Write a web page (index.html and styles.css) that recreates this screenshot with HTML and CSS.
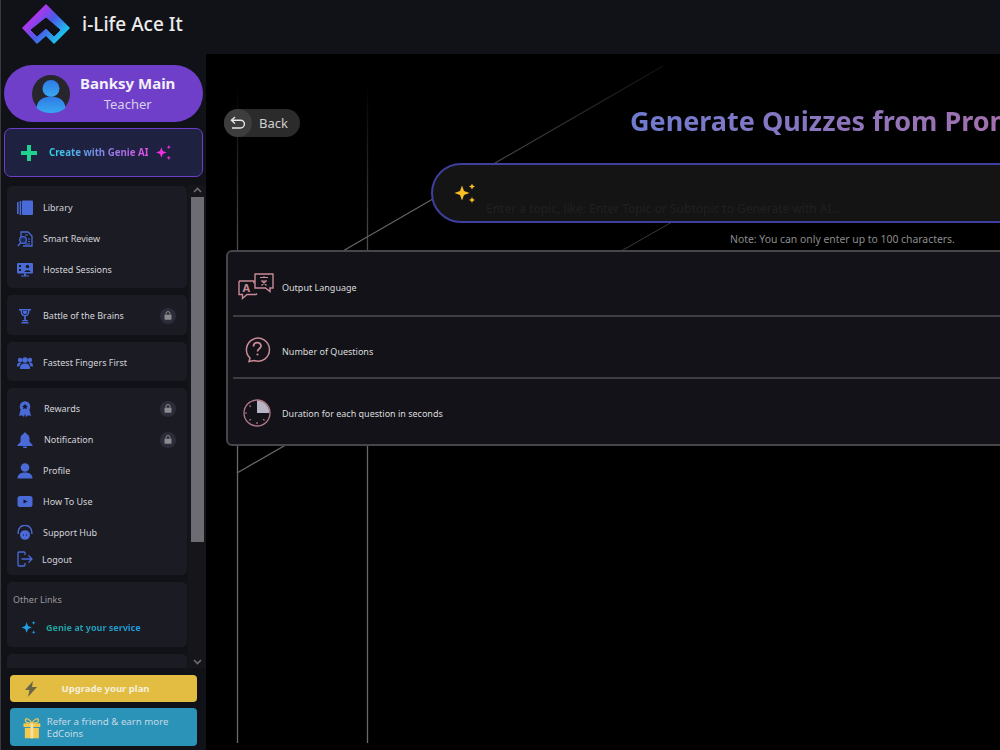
FILE: index.html
```html
<!DOCTYPE html>
<html lang="en">
<head>
    <meta charset="UTF-8">
    <meta name="viewport" content="width=device-width, initial-scale=1.0">
    <title>i-Life Ace It</title>
    <link rel="stylesheet" href="styles.css">
</head>
<body>
    <div class="sidebar">
        <div class="brand">
            <svg class="brand-logo" width="48" height="40" viewBox="0 0 48 40">
                <defs>
                    <linearGradient id="logoGrad" x1="6" y1="4" x2="40" y2="36" gradientUnits="userSpaceOnUse">
                        <stop offset="0" stop-color="#f01ef0"/>
                        <stop offset="0.55" stop-color="#4a5ae8"/>
                        <stop offset="1" stop-color="#14d4ee"/>
                    </linearGradient>
                </defs>
                <path d="M24 1 L47 24 L32 39 L24 31 L15 39 L1 24 Z" fill="url(#logoGrad)" stroke="url(#logoGrad)" stroke-width="1.500" stroke-linejoin="round"/>
                <path d="M9 26 L24 14 L38 26 L32 32 L24 24 L15 32 Z" fill="#111118" stroke="#111118" stroke-linejoin="round"/>
            </svg>
            <span class="brand-name">i-Life Ace It</span>
        </div>

        <div class="profile">
            <svg class="avatar" width="38" height="38" viewBox="0 0 38 38">
                <defs>
                    <linearGradient id="avatarGrad" x1="0" y1="0" x2="0" y2="1">
                        <stop offset="0" stop-color="#2f7ae6"/>
                        <stop offset="1" stop-color="#38a8f0"/>
                    </linearGradient>
                </defs>
                <circle cx="19" cy="19" r="19" fill="#26262c"/>
                <circle cx="19" cy="13.500" r="8.500" fill="url(#avatarGrad)"/>
                <path d="M4.500 33 C5 25 12 21.500 19 21.500 C26 21.500 33 25 33.500 33 C29 37 24 38 19 38 C14 38 9 37 4.500 33 Z" fill="url(#avatarGrad)"/>
            </svg>
            <div class="profile-text">
                <div class="profile-name">Banksy Main</div>
                <div class="profile-role">Teacher</div>
            </div>
        </div>

        <div class="create-box">
            <svg width="16" height="16" viewBox="0 0 16 16"><path d="M6 0h4v6h6v4h-6v6H6v-6H0V6h6z" fill="#1ed38e"/></svg>
            <span class="create-text">Create with Genie AI</span>
            <svg width="17" height="17" viewBox="0 0 16 16" fill="#f02fe0"><path d="M6 3 L7.300 6.700 L11 8 L7.300 9.300 L6 13 L4.700 9.300 L1 8 L4.700 6.700 Z"/><path d="M13 1 L13.600 2.400 L15 3 L13.600 3.600 L13 5 L12.400 3.600 L11 3 L12.400 2.400 Z"/><path d="M13 11 L13.600 12.400 L15 13 L13.600 13.600 L13 15 L12.400 13.600 L11 13 L12.400 12.400 Z"/></svg>
        </div>

        <div class="nav-wrap">
            <div class="nav">
                <div class="card card-top">
                    <div class="nav-row">
                        <svg class="nav-icon" viewBox="0 0 16 16" fill="#4a6ad8"><rect x="0" y="2" width="1.600" height="12"/><rect x="2.600" y="1" width="1.600" height="14"/><rect x="5" y="0.500" width="11" height="14.500" rx="1"/></svg>
                        <span>Library</span>
                    </div>
                    <div class="nav-row">
                        <svg class="nav-icon" viewBox="0 0 16 16" fill="none" stroke="#4a6ad8"><path d="M4 7V1h7l4 4v10H6" stroke-width="1.300"/><path d="M8 4h3M11 8h2M11 10.500h2M8 13h5" stroke-width="1"/><circle cx="6" cy="9" r="3.400" fill="#1c2a5c" stroke-width="1.200"/><path d="M1 15l2.600-3.400" stroke-width="1.400"/></svg>
                        <span>Smart Review</span>
                    </div>
                    <div class="nav-row">
                        <svg class="nav-icon" viewBox="0 0 16 16" fill="#4a6ad8"><rect x="0" y="1" width="16" height="10.500" rx="1"/><circle cx="10.500" cy="4.500" r="1.800" fill="#1b1b24"/><path d="M7.500 10c0-2.400 6-2.400 6 0z" fill="#1b1b24"/><rect x="2" y="3" width="2" height="2" fill="#1b1b24"/><rect x="2" y="7" width="2" height="2" fill="#1b1b24"/><path d="M7 11.500h2v2h3v1H4v-1h3z"/></svg>
                        <span>Hosted Sessions</span>
                    </div>
                </div>

                <div class="card card-battle">
                    <div class="nav-row">
                        <svg class="nav-icon" viewBox="0 0 16 16" fill="#4a6ad8"><path d="M2 1h12v1.500h-1.400L12 5.500c-.4 1.500-1.800 2.600-3.200 2.800V12h2v1.200H5.200V12h2V8.300C5.800 8.100 4.400 7 4 5.500L3.400 2.500H2zM4.900 2.500l.5 2.700c.3 1 1.400 1.700 2.600 1.700s2.300-.7 2.600-1.700l.5-2.700z"/><path d="M5.800 3h4.400l-.4 2c-.2.7-1 1.100-1.800 1.100S6.400 5.700 6.200 5z"/><rect x="4.500" y="14" width="7" height="1.500"/></svg>
                        <span>Battle of the Brains</span>
                        <span class="lock"><svg width="8" height="9" viewBox="0 0 8 9"><path d="M2 4V2.500a2 2 0 0 1 4 0V4" fill="none" stroke="#8a8a90" stroke-width="1"/><rect x="0.500" y="3.800" width="7" height="5" rx="0.800" fill="#8a8a90"/></svg></span>
                    </div>
                </div>

                <div class="card card-fastest">
                    <div class="nav-row">
                        <svg class="nav-icon" viewBox="0 0 16 16" fill="#4a6ad8"><circle cx="8" cy="5" r="2.800"/><circle cx="3" cy="5" r="2.200"/><circle cx="13" cy="5" r="2.200"/><path d="M3 14c0-4 1.500-5.500 5-5.500S13 10 13 14z"/><path d="M0 11.500C0 8.500 1 7.500 3 7.500c.6 0 1.200.1 1.600.3C3.400 8.600 2.600 9.800 2.400 11.500zM16 11.500c0-3-1-4-3-4-.6 0-1.200.1-1.600.3 1.200.8 2 2 2.200 3.700z"/></svg>
                        <span>Fastest Fingers First</span>
                    </div>
                </div>

                <div class="card card-long">
                    <div class="nav-row">
                        <svg class="nav-icon" viewBox="0 0 16 16" fill="#4a6ad8"><path d="M3.500 9l-1.500 6 3-.8L7 16l1-3.500L9 16l2-1.800 3 .8-1.500-6z"/><circle cx="8" cy="5.500" r="5.300"/><path d="M8 2.800l.9 1.800 2 .3-1.400 1.400.3 2-1.800-1-1.800 1 .3-2L5.100 4.900l2-.3z" fill="#14142a"/></svg>
                        <span class="shift">Rewards</span>
                        <span class="lock"><svg width="8" height="9" viewBox="0 0 8 9"><path d="M2 4V2.500a2 2 0 0 1 4 0V4" fill="none" stroke="#8a8a90" stroke-width="1"/><rect x="0.500" y="3.800" width="7" height="5" rx="0.800" fill="#8a8a90"/></svg></span>
                    </div>
                    <div class="nav-row">
                        <svg class="nav-icon" viewBox="0 0 16 16" fill="#4a6ad8"><path d="M8 0.500c.8 0 1.300.5 1.300 1.200 2 .6 3.200 2.400 3.200 4.800v3L15.500 13v1H.5v-1l3-3V6.500c0-2.400 1.200-4.200 3.200-4.800C6.700 1 7.200.5 8 .5z"/><path d="M6 14.500h4a2 2 0 0 1-4 0z"/></svg>
                        <span class="shift">Notification</span>
                        <span class="lock"><svg width="8" height="9" viewBox="0 0 8 9"><path d="M2 4V2.500a2 2 0 0 1 4 0V4" fill="none" stroke="#8a8a90" stroke-width="1"/><rect x="0.500" y="3.800" width="7" height="5" rx="0.800" fill="#8a8a90"/></svg></span>
                    </div>
                    <div class="nav-row">
                        <svg class="nav-icon" viewBox="0 0 16 16" fill="#4a6ad8"><circle cx="8" cy="4.500" r="4.300"/><path d="M0.500 15.500c0-4 3-6 7.500-6s7.500 2 7.500 6z"/></svg>
                        <span>Profile</span>
                    </div>
                    <div class="nav-row">
                        <svg class="nav-icon" viewBox="0 0 16 16"><rect x="0.500" y="2" width="15" height="11" rx="2.500" fill="#4a6ad8"/><path d="M6.500 5.500l4 2-4 2z" fill="#14142a"/></svg>
                        <span>How To Use</span>
                    </div>
                    <div class="nav-row">
                        <svg class="nav-icon" viewBox="0 0 16 16" fill="none"><path d="M1.200 9V7a6.800 6.800 0 0 1 13.600 0v2" stroke="#4a6ad8" stroke-width="1.400"/><ellipse cx="8" cy="10" rx="5" ry="4.800" fill="#4a6ad8"/><path d="M6 10h1M9 10h1" stroke="#14142a" stroke-width="1"/></svg>
                        <span>Support Hub</span>
                    </div>
                    <div class="nav-row nav-row-short">
                        <svg class="nav-icon" viewBox="0 0 16 16" fill="none" stroke="#4a6ad8" stroke-width="1.300"><path d="M8 4V2a1 1 0 0 0-1-1H2a1 1 0 0 0-1 1v12a1 1 0 0 0 1 1h5a1 1 0 0 0 1-1v-2"/><path d="M4.500 8H15M11.500 4.500L15 8l-3.500 3.500"/></svg>
                        <span class="pull">Logout</span>
                    </div>
                </div>

                <div class="card card-links">
                    <div class="links-title">Other Links</div>
                    <div class="genie-row">
                        <svg width="15" height="15" viewBox="0 0 16 16" fill="#1e9fe8"><path d="M6 2.500L7.500 6.500 11.500 8 7.500 9.500 6 13.500 4.500 9.500 .5 8 4.500 6.500z"/><path d="M13.500 1l.6 1.400 1.400.6-1.400.6-.6 1.400-.6-1.400L11.500 3l1.400-.6z"/><path d="M13.500 11l.6 1.400 1.400.6-1.400.6-.6 1.400-.6-1.400-1.400-.6 1.400-.6z"/></svg>
                        <span class="genie-text">Genie at your service</span>
                    </div>
                </div>

                <div class="card card-empty"></div>
            </div>
            <div class="scroll-track">
                <svg class="scroll-arrow" width="9" height="6" viewBox="0 0 9 6"><path d="M1 5l3.500-3.500L8 5" fill="none" stroke="#6d6d73" stroke-width="1.600"/></svg>
                <div class="scroll-thumb"></div>
                <svg class="scroll-arrow arrow-down" width="9" height="6" viewBox="0 0 9 6"><path d="M1 1l3.500 3.500L8 1" fill="none" stroke="#6d6d73" stroke-width="1.600"/></svg>
            </div>
        </div>

        <div class="upgrade">
            <svg class="upgrade-icon" width="12" height="16" viewBox="0 0 12 16"><path d="M8 0L0 9h4.500L3 16l9-10H7z" fill="#6b6548"/></svg>
            <span>Upgrade your plan</span>
        </div>
        <div class="refer">
            <svg width="19" height="22" viewBox="0 0 19 22" fill="#f2c84e"><path d="M9.500 6C7 1 3 0 2.500 2.500S6 6 9.500 6C13 6 17 5 16.500 2.500S12 1 9.500 6z" fill="none" stroke="#f2c84e" stroke-width="1.300"/><rect x="0.500" y="6" width="18" height="4"/><rect x="2" y="11" width="15" height="11"/><rect x="8" y="6" width="3" height="16" fill="#f6e3a4"/></svg>
            <span>Refer a friend &amp; earn more EdCoins</span>
        </div>
    </div>

    <div class="main">
        <div class="topbar"></div>
        <div class="stage">
            <svg class="bg-lines" width="794" height="696" viewBox="0 0 794 696">
                <defs>
                    <linearGradient id="lineFade" x1="0" y1="30" x2="0" y2="260" gradientUnits="userSpaceOnUse">
                        <stop offset="0" stop-color="#6a6a6a" stop-opacity="0"/>
                        <stop offset="1" stop-color="#6a6a6a"/>
                    </linearGradient>
                    <linearGradient id="diagFade" x1="457" y1="12" x2="226" y2="146" gradientUnits="userSpaceOnUse">
                        <stop offset="0" stop-color="#555" stop-opacity="0.2"/>
                        <stop offset="1" stop-color="#666"/>
                    </linearGradient>
                </defs>
                <line x1="31.500" y1="30" x2="31.500" y2="689" stroke="url(#lineFade)" stroke-width="1.300"/>
                <line x1="161.500" y1="30" x2="161.500" y2="689" stroke="url(#lineFade)" stroke-width="1.300"/>
                <line x1="31" y1="419" x2="130" y2="362" stroke="#666" stroke-width="1.200"/>
                <line x1="130" y1="201" x2="457" y2="12" stroke="url(#diagFade)" stroke-width="1.200"/>
                <line x1="410" y1="200" x2="480" y2="160" stroke="#3a3a3a" stroke-width="1"/>
            </svg>

            <div class="head-row">
                <div class="back-btn">
                    <span class="back-circle">
                        <svg width="16" height="14" viewBox="0 0 16 14" fill="none" stroke="#e6e6e6" stroke-width="1.400"><path d="M5 1L1.500 4.200 5 7.400"/><path d="M1.500 4.200h9a3.600 3.600 0 0 1 0 7.800H2"/></svg>
                    </span>
                    <span>Back</span>
                </div>
                <h1 class="page-title">Generate Quizzes from Prompt</h1>
            </div>

            <div class="prompt-box">
                <svg width="24" height="24" viewBox="0 0 24 24" fill="#fbbf24"><path d="M9 4.500L11 10l5.500 2L11 14l-2 5.500L7 14l-5.500-2L7 10z"/><path d="M19 2.500l.9 2.100 2.100.9-2.100.9-.9 2.100-.9-2.100-2.100-.9 2.100-.9z"/><path d="M19 16l.9 2.100 2.100.9-2.100.9-.9 2.100-.9-2.100-2.100-.9 2.100-.9z"/></svg>
                <input class="prompt-input" type="text" placeholder="Enter a topic, like: Enter Topic or Subtopic to Generate with AI...">
            </div>
            <div class="note">Note: You can only enter up to 100 characters.</div>

            <div class="options">
                <div class="option option-first">
                    <svg class="option-icon" width="38" height="30" viewBox="0 0 38 30" fill="none" stroke="#c98a97" stroke-width="1.400">
                        <path d="M1 8h15v2.500M1 8v13.500h3.500v4l4.500-4h9l1-1" />
                        <path d="M17 1h18v14h-3v3.500L27.500 15H17z"/>
                        <text x="4.500" y="19" class="glyph-a">A</text>
                        <path d="M22 4.500h8M26 3v1.500M23 8h6M23.500 12.500l5-5M28.500 12.500l-5-5" stroke-width="1.100"/>
                    </svg>
                    <span>Output Language</span>
                </div>
                <div class="option option-mid">
                    <svg class="option-icon" width="26" height="28" viewBox="0 0 26 28" fill="none" stroke="#c98a97" stroke-width="1.500">
                        <path d="M5 24.500l1-3.500A11.500 11.500 0 1 1 10 23.500z"/>
                        <path d="M9.500 9.500c0-5 7.500-5 7.500-.5 0 2.700-3.500 2.700-3.500 5.500" stroke-width="1.800"/>
                        <circle cx="13.500" cy="17.500" r="1.100" fill="#c98a97" stroke="none"/>
                    </svg>
                    <span>Number of Questions</span>
                </div>
                <div class="option option-last">
                    <svg class="option-icon" width="28" height="28" viewBox="0 0 28 28" fill="none">
                        <path d="M14 14V1.500A12.500 12.500 0 0 1 26.500 14z" fill="#b4b4c4"/>
                        <circle cx="14" cy="14" r="13" stroke="#b07a88" stroke-width="1.300"/>
                        <path d="M14 23v2M4 14h-2M6.500 6.500l1.300 1.300M6.500 21.500l1.300-1.300M21.500 21.500l-1.300-1.300" stroke="#b07a88" stroke-width="1.200"/>
                    </svg>
                    <span>Duration for each question in seconds</span>
                </div>
            </div>
        </div>
    </div>
</body>
</html>
```

FILE: styles.css
```css
/* Page */
html, body {
    height: 100%;
}

body {
    margin: 0;
    display: flex;
    width: 1000px;
    height: 750px;
    overflow: hidden;
    background-color: #000;
    color: #ddd;
    font-family: "Noto Sans", "Open Sans", sans-serif;
}

/* Sidebar */
.sidebar {
    width: 205px;
    flex-shrink: 0;
    display: flex;
    flex-direction: column;
    background-color: #111118;
    border-left: 1px solid #3a3a3e;
}

.brand {
    height: 65px;
    flex-shrink: 0;
    display: flex;
    align-items: flex-start;
    gap: 12px;
    padding: 4px 0 0 21px;
    box-sizing: border-box;
}

.brand-name {
    font-size: 19px;
    font-weight: 500;
    color: #ececec;
    line-height: 40px;
}

.profile {
    height: 57px;
    margin: 0 3px 6px 3px;
    display: flex;
    align-items: center;
    gap: 10px;
    padding-left: 28px;
    box-sizing: border-box;
    border-radius: 29px;
    background-color: #6f3fc9;
}

.profile-text {
    text-align: center;
    line-height: 21px;
}

.profile-name {
    font-size: 15px;
    font-weight: 700;
    color: #f2f0fa;
}

.profile-role {
    font-size: 13px;
    color: #d8d0ea;
}

.create-box {
    height: 49px;
    margin: 0 3px 8px 3px;
    display: flex;
    align-items: center;
    padding-left: 16px;
    box-sizing: border-box;
    border: 1px solid #6b3fc8;
    border-radius: 7px;
    background-color: #1e2140;
}

.create-text {
    margin: 0 7px 0 12px;
    font-size: 9.700px;
    font-weight: 700;
    background: linear-gradient(90deg, #2fd5e8, #7a8ce8 50%, #e04fe6);
    -webkit-background-clip: text;
    background-clip: text;
    color: transparent;
}

/* Scrolling nav */
.nav-wrap {
    height: 483px;
    flex-shrink: 0;
    display: flex;
}

.nav {
    flex: 1;
    padding: 1px 1px 0 6px;
    overflow: hidden;
}

.card {
    margin-bottom: 7px;
    border-radius: 5px;
    background-color: #1b1b24;
}

.card-top {
    padding: 6px 0 3px;
}

.card-battle {
    padding: 5px 0 4px;
}

.card-fastest {
    padding: 5px 0 3px;
}

.card-long {
    padding: 5px 0;
}

.nav-row {
    height: 31px;
    display: flex;
    align-items: center;
    padding: 0 11px 0 10px;
    font-size: 9px;
    color: #d4d4d8;
}

.nav-row-short {
    height: 22px;
}

.nav-icon {
    width: 16px;
    height: 16px;
    margin-right: 10px;
    flex-shrink: 0;
}

.shift {
    margin-left: 1px;
}

.pull {
    margin-left: -1px;
}

.lock {
    width: 16px;
    height: 16px;
    margin-left: auto;
    display: flex;
    align-items: center;
    justify-content: center;
    border-radius: 50%;
    background-color: #2d2d3a;
}

.card-links {
    height: 65px;
    box-sizing: border-box;
}

.links-title {
    padding: 11px 0 0 6px;
    font-size: 9px;
    color: #999;
}

.genie-row {
    display: flex;
    align-items: center;
    gap: 10px;
    padding: 14px 0 0 14px;
}

.genie-text {
    font-size: 9px;
    font-weight: 700;
    background: linear-gradient(90deg, #22a59a, #1f9fe8);
    -webkit-background-clip: text;
    background-clip: text;
    color: transparent;
}

.card-empty {
    height: 40px;
    margin-bottom: 0;
}

.scroll-track {
    width: 18px;
    flex-shrink: 0;
    display: flex;
    flex-direction: column;
    align-items: center;
    background-color: #15151a;
}

.scroll-arrow {
    margin-top: 2px;
    flex-shrink: 0;
}

.arrow-down {
    margin-top: auto;
    margin-bottom: 3px;
}

.scroll-thumb {
    width: 13px;
    height: 345px;
    margin-top: 4px;
    background-color: #6c6c72;
}

/* Bottom buttons */
.upgrade {
    height: 27px;
    margin: 7px 9px 6px 9px;
    display: flex;
    align-items: center;
    justify-content: center;
    position: relative;
    padding-left: 4px;
    border-radius: 4px;
    background-color: #e2bd42;
    font-size: 9.500px;
    font-weight: 700;
    color: #f5f0dc;
}

.upgrade-icon {
    position: absolute;
    left: 15px;
    top: 6px;
}

.refer {
    height: 38px;
    margin: 0 9px;
    display: flex;
    align-items: center;
    gap: 6px;
    padding: 2px 0 0 13px;
    box-sizing: border-box;
    border-radius: 4px;
    background-color: #2b92b8;
    font-size: 9.700px;
    line-height: 12px;
    color: #c4dbe6;
}

/* Main area */
.main {
    flex: 1;
    min-width: 0;
    display: flex;
    flex-direction: column;
    overflow: hidden;
}

.topbar {
    height: 54px;
    flex-shrink: 0;
    background-color: #111118;
}

.stage {
    flex: 1;
    position: relative;
    padding: 55px 0 0 18px;
    overflow: hidden;
}

.bg-lines {
    position: absolute;
    left: 0;
    top: 0;
}

.head-row {
    position: relative;
    display: flex;
    align-items: center;
    height: 28px;
    width: 1200px;
}

.back-btn {
    width: 76px;
    height: 28px;
    display: flex;
    align-items: center;
    gap: 7px;
    flex-shrink: 0;
    border-radius: 14px;
    background-color: #2b2b2b;
    font-size: 13px;
    color: #cfcfcf;
}

.back-circle {
    width: 28px;
    height: 28px;
    display: flex;
    align-items: center;
    justify-content: center;
    border-radius: 50%;
    background-color: #3d3d3d;
}

.page-title {
    margin: -4px 0 0 330px;
    font-size: 27px;
    line-height: 28px;
    font-weight: 700;
    white-space: nowrap;
    background: linear-gradient(90deg, #6f7bd0, #a86fa8);
    -webkit-background-clip: text;
    background-clip: text;
    color: transparent;
}

.prompt-box {
    position: relative;
    width: 900px;
    height: 60px;
    margin: 26px 0 0 207px;
    display: flex;
    align-items: center;
    padding-left: 20px;
    box-sizing: border-box;
    border: 2px solid #3f3f9f;
    border-radius: 30px;
    background-color: #141414;
}

.prompt-input {
    flex: 1;
    margin: 0 0 0 9px;
    padding: 31px 0 0 0;
    border: 0;
    outline: 0;
    background: transparent;
    font-family: inherit;
    font-size: 12px;
    color: #ddd;
}

.prompt-input::placeholder {
    color: #202020;
    opacity: 1;
}

.note {
    position: relative;
    margin: 9px 0 0 506px;
    font-size: 10.400px;
    line-height: 15px;
    color: #8c8c8c;
    white-space: nowrap;
}

.options {
    position: relative;
    width: 900px;
    margin: 3px 0 0 2px;
    padding: 0 5px;
    box-sizing: border-box;
    border: 2px solid #45454a;
    border-radius: 6px;
    background-color: #121218;
}

.option {
    display: flex;
    align-items: center;
    font-size: 9px;
    color: #dcdcdc;
}

.option-first {
    height: 55px;
    padding-top: 8px;
    border-bottom: 2px solid #3e3e42;
}

.option-mid {
    height: 52px;
    padding-top: 8px;
    border-bottom: 2px solid #3e3e42;
}

.option-last {
    height: 62px;
    padding-top: 3px;
}

.option-icon {
    width: 48px;
    margin-right: 1px;
    flex-shrink: 0;
}

.glyph-a {
    font-size: 11px;
    font-weight: 700;
    fill: #c98a97;
    stroke: none;
}
```
